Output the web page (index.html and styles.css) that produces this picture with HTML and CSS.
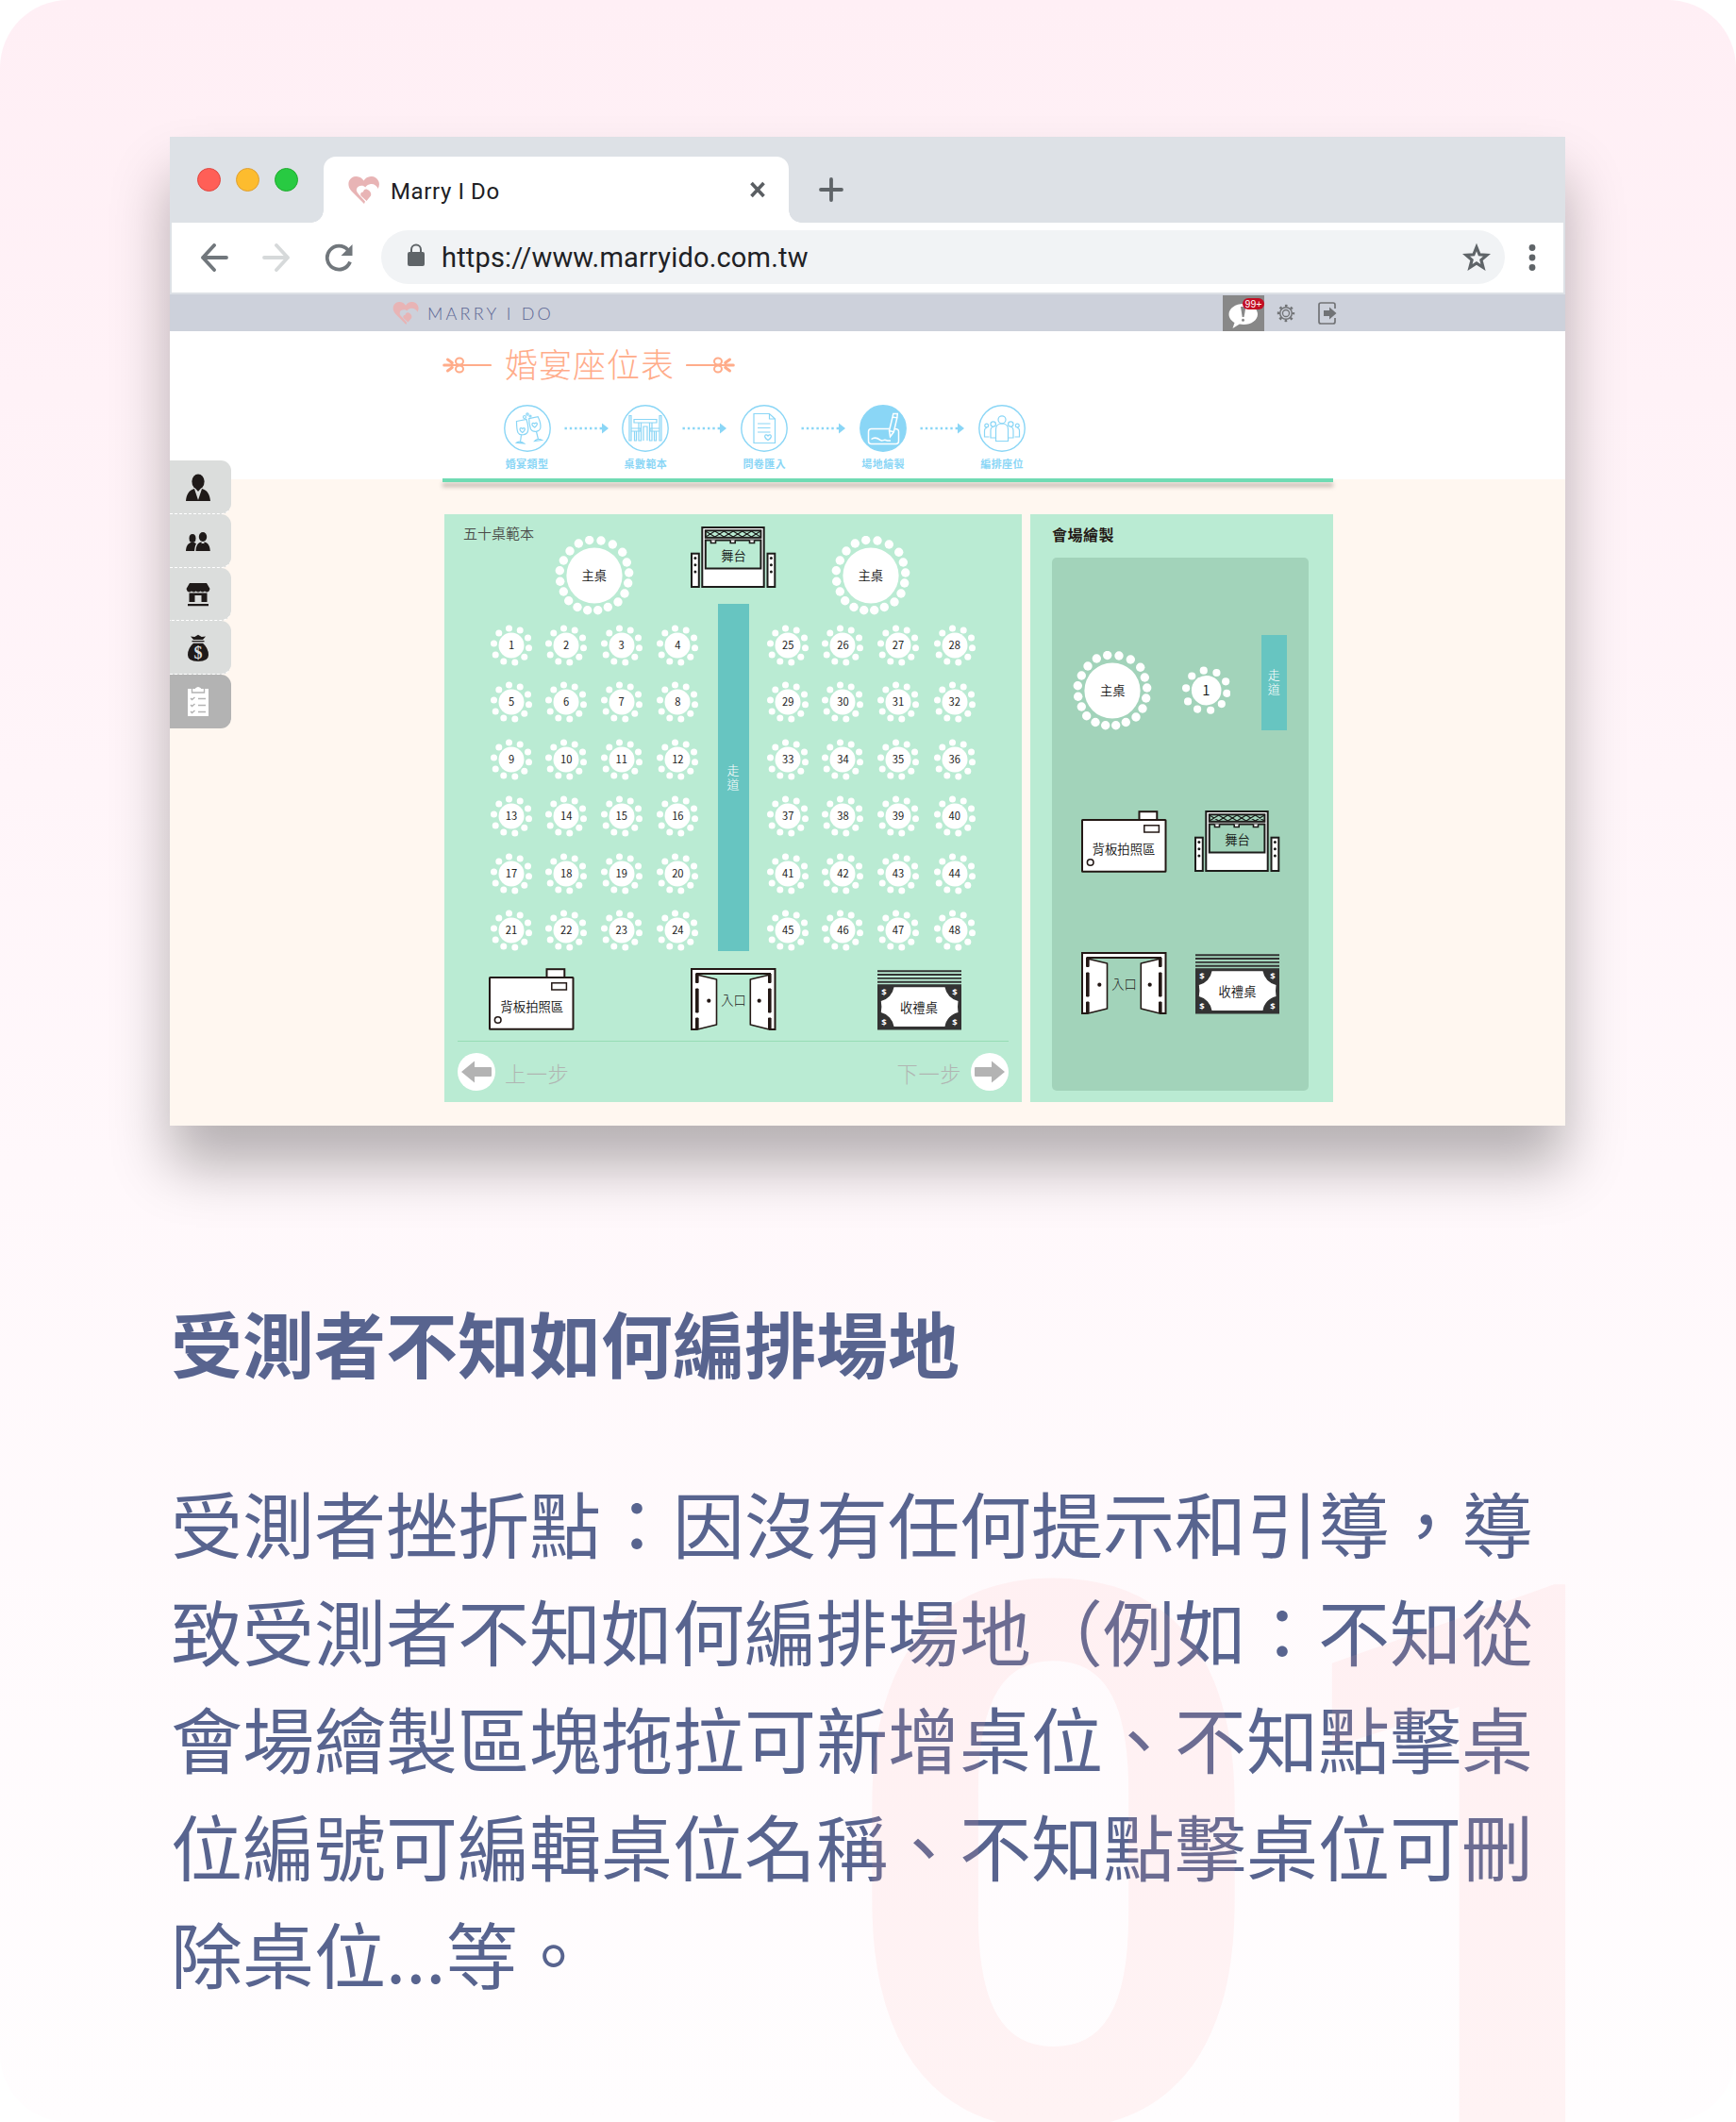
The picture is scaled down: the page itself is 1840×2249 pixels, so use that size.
FILE: index.html
```html
<!DOCTYPE html>
<html lang="zh-Hant">
<head>
<meta charset="utf-8">
<title>Marry I Do</title>
<link rel="stylesheet" href="styles.css">
</head>
<body>
<svg class="defs" width="0" height="0" aria-hidden="true">
  <symbol id="heart" viewBox="0 0 33 29">
    <path d="M17 29 3.500 15.500C-.5 11-1 4.500 4 1.200 8.500-1.400 14 .4 16.500 4.500 19 .4 24.500-1.400 29 1.200c4.500 3 4.800 7.800 2.600 11.800C30.500 9.800 27 7.500 23.200 8.200c-2.700.5-4 1.800-5 3.300C16.500 9.500 13 9.300 10.500 11c-2.500 2.300-2 5 .3 7.500L18 26.500z"/>
    <path d="M13.500 20.500c-1-2.500.5-4 2.500-4 .3-2.500 2.500-3.700 4.500-2.500 3 1.500 4.500 4 3.500 6.500l-4.500 5.500z"/>
  </symbol>
  <symbol id="main-table" viewBox="-42 -42 84 84">
    <circle r="29.600"/>
    <circle cx="-5.300" cy="-37.500" r="4.700"/><circle cx="7" cy="-37" r="4.700"/><circle cx="19.300" cy="-33" r="4.700"/><circle cx="29.700" cy="-24.700" r="4.700"/><circle cx="34.300" cy="-14" r="4.700"/>
    <circle cx="36.700" cy="-3" r="4.700"/><circle cx="35.700" cy="8" r="4.700"/><circle cx="32" cy="19" r="4.700"/><circle cx="25" cy="28" r="4.700"/><circle cx="14.300" cy="33.500" r="4.700"/>
    <circle cx="3.700" cy="36.700" r="4.700"/><circle cx="-7.300" cy="36.700" r="4.700"/><circle cx="-18" cy="33.500" r="4.700"/><circle cx="-27.300" cy="26.700" r="4.700"/><circle cx="-32.700" cy="17" r="4.700"/>
    <circle cx="-36.300" cy="6.300" r="4.700"/><circle cx="-36.700" cy="-5.300" r="4.700"/><circle cx="-32.700" cy="-16" r="4.700"/><circle cx="-26" cy="-26" r="4.700"/><circle cx="-16.700" cy="-34" r="4.700"/>
  </symbol>
  <symbol id="guest-table" viewBox="-22 -22 44 44">
    <circle r="13.500"/>
    <circle cx="-2.500" cy="-18" r="3.500"/><circle cx="9.200" cy="-16" r="3.500"/><circle cx="17.500" cy="-8" r="3.500"/><circle cx="18.500" cy="2.700" r="3.500"/><circle cx="13.800" cy="12.300" r="3.500"/>
    <circle cx="3.800" cy="18" r="3.500"/><circle cx="-8.200" cy="17" r="3.500"/><circle cx="-16.800" cy="10" r="3.500"/><circle cx="-18.500" cy="-2" r="3.500"/><circle cx="-13.200" cy="-13" r="3.500"/>
  </symbol>
  <symbol id="stage" viewBox="0 0 91 66">
    <g stroke="#1d1d1b" stroke-width="2">
      <rect x="12.300" y="1" width="65.400" height="63" fill="#fff"/>
      <rect class="board" x="15.800" y="4.300" width="58.600" height="7.500"/>
      <rect class="board" x="15.800" y="14.500" width="58.600" height="30"/>
      <path d="m16 5 9.700 6 9.700-6 9.700 6 9.700-6 9.700 6 9.500-6M16 11l9.700-6 9.700 6 9.700-6 9.700 6 9.700-6 9.500 6" fill="none" stroke-width="1.100"/>
      <path d="M21.500 14.500v3h5v-3M42.200 14.500v3h5v-3M62.500 14.500v3h5v-3" fill="#fff" stroke-width="1.600"/>
      <rect x="1" y="28.700" width="7.800" height="35.300" fill="#fff"/>
      <rect x="81.500" y="28.700" width="7.800" height="35.300" fill="#fff"/>
    </g>
    <g fill="#1d1d1b"><circle cx="4.900" cy="33.500" r="1.500"/><circle cx="4.900" cy="40.700" r="1.500"/><circle cx="4.900" cy="48" r="1.500"/><circle cx="85.400" cy="33.500" r="1.500"/><circle cx="85.400" cy="40.700" r="1.500"/><circle cx="85.400" cy="48" r="1.500"/></g>
  </symbol>
  <symbol id="booth" viewBox="0 0 91 66">
    <g fill="#fff" stroke="#231815" stroke-width="2">
      <rect x="61.500" y="1.200" width="18.800" height="8.800"/>
      <rect x="1" y="10" width="88.500" height="54.700" rx=".5"/>
      <rect x="66.800" y="15.800" width="15.600" height="7.200" stroke-width="1.500"/>
      <circle cx="9.700" cy="55" r="3.300" stroke-width="1.600"/>
    </g>
  </symbol>
  <symbol id="door" viewBox="0 0 91 66">
    <path d="M1 65V1h88.500v64h-5.500V6H6.500v59z" fill="#fff" stroke="#231815" stroke-width="2"/>
    <g fill="#fff" stroke="#231815" stroke-width="1.600" stroke-linejoin="round">
      <path d="M7.300 7.300 27.500 12v48L7.300 65zM83.200 7.300 63.300 12v48l19.900 5z"/>
    </g>
    <path d="M6.800 6v9.500M6.800 22v25M6.800 53v12M83.800 6v9.500M83.800 22v25M83.800 53v12" stroke="#231815" stroke-width="3.600"/>
    <path d="M4.600 16v5.500h4.600V16zM4.600 47.500v5h4.600v-5zM81.600 16v5.500h4.600V16zM81.600 47.500v5h4.600v-5z" fill="#fff"/>
    <circle cx="19.300" cy="34.700" r="2.100" fill="#231815"/><circle cx="72.700" cy="34.700" r="2.100" fill="#231815"/>
  </symbol>
  <symbol id="cash" viewBox="0 0 89 64">
    <path d="M0 1.200h89M0 5h89M0 8.900h89M0 12.800h89" stroke="#333" stroke-width="1.900"/>
    <rect y="15.200" width="89" height="48.300" fill="#333"/>
    <path d="M17.500 18.300h54A18 18 0 0 0 85.500 33Q84.500 39 85.500 45A18 18 0 0 0 71.500 60h-54A18 18 0 0 0 3.800 45Q5 39 3.800 33A18 18 0 0 0 17.500 18.300z" fill="#fff"/>
  </symbol>
  <symbol id="dots" viewBox="0 0 48 12">
    <path d="M1.500 6H41" stroke="#8ad6f6" stroke-width="2.500" stroke-dasharray="2.400 2.900"/><path d="M41 .5 48 6l-7 5.500z" fill="#8ad6f6"/>
  </symbol>
  <symbol id="flourish" viewBox="0 0 52 18">
    <g fill="none" stroke="#ffac8a" stroke-linecap="round"><path d="M10 9h41" stroke-width="2.200"/><path d="M1.700 9H10M5.500 3 10.300 6.500M5.500 15l4.800-3.500" stroke-width="3"/><ellipse cx="18" cy="5" rx="4" ry="3.500" stroke-width="2"/><ellipse cx="18" cy="13" rx="4" ry="3.500" stroke-width="2"/></g>
  </symbol>
</svg>

<main class="card">
  <section class="window">
    <div class="tabstrip">
      <div class="lights"><i class="light red"></i><i class="light amber"></i><i class="light green"></i></div>
      <div class="tab">
        <svg class="tab-heart"><use href="#heart"/></svg>
        <span class="tab-title">Marry I Do</span>
        <svg class="tab-close" viewBox="0 0 18 18"><path d="m2.500 2 13 14M15.500 2l-13 14" stroke="#5a5e62" stroke-width="3.600"/></svg>
      </div>
      <svg class="tab-new" viewBox="0 0 26 26"><path d="M13 2v22M2 13h22" stroke="#5f6468" stroke-width="3.800" stroke-linecap="round"/></svg>
    </div>
    <div class="toolbar">
      <svg class="nav" viewBox="0 0 30 30"><path d="M28 15H3M15 2 3 15l12 13" fill="none" stroke="#71777c" stroke-width="3.800" stroke-linecap="round" stroke-linejoin="round"/></svg>
      <svg class="nav" viewBox="0 0 30 30"><path d="M2 15h25M15 2l12 13-12 13" fill="none" stroke="#d6d9da" stroke-width="3.800" stroke-linecap="round" stroke-linejoin="round"/></svg>
      <svg class="nav" viewBox="0 0 30 30"><path d="M27 19.500A12.500 12.500 0 1 1 24.800 7" fill="none" stroke="#71777c" stroke-width="3.800"/><path d="M29.500 1v12h-12z" fill="#71777c"/></svg>
      <div class="omnibox">
        <svg class="lock" viewBox="0 0 18 24"><rect y="9" width="18" height="15" rx="2" fill="#5f6468"/><path d="M4 10V6.500a5 5 0 0 1 10 0V10" fill="none" stroke="#5f6468" stroke-width="2"/></svg>
        <span class="url">https://www.marryido.com.tw</span>
        <svg class="star" viewBox="0 0 30 30"><path d="m15 4 3.100 7.800 8 .5-6.200 5.200 2.100 8-7-4.500-7 4.500 2.100-8-6.200-5.200 8-.5z" fill="none" stroke="#5f6468" stroke-width="3.200"/></svg>
      </div>
      <svg class="more" viewBox="0 0 8 30"><circle cx="4" cy="4.500" r="3.400"/><circle cx="4" cy="15" r="3.400"/><circle cx="4" cy="25.500" r="3.400"/></svg>
    </div>

    <div class="appbar">
      <svg class="app-heart"><use href="#heart"/></svg>
      <span class="brand">MARRY I DO</span>
      <div class="notice">
        <svg viewBox="0 0 44 38"><path d="M22 9c8.500 0 15 4.800 15 11s-6.500 11-15 11c-1.500 0-3-.1-4.200-.4L10.500 35l2-6C9 27 6.500 23.800 6.500 20 6.500 13.800 13.500 9 22 9z" fill="#fff"/><path d="M19 12h5.500l-2 11h-1.800z" fill="#888"/><circle cx="21.500" cy="26.200" r="1.500" fill="#888"/></svg>
        <span class="badge">99+</span>
      </div>
      <svg class="gear" viewBox="-10 -10 20 20"><circle r="8" fill="none" stroke="#717376" stroke-width="2.400" stroke-dasharray="2.600 3.683" stroke-dashoffset="1.300"/><circle r="6.300" fill="none" stroke="#717376" stroke-width="1.500"/><circle r="3.500" fill="none" stroke="#717376" stroke-width="1.300"/></svg>
      <svg class="exit" viewBox="0 0 20 24"><path d="M18 7V3q0-2-2-2H3Q1 1 1 3v18q0 2 2 2h13q2 0 2-2v-4" fill="none" stroke="#717376" stroke-width="1.700"/><path d="M6 9h6V5.500l7.500 6.500-7.500 6.500V15H6z" fill="#717376"/></svg>
    </div>

    <div class="page">
      <header class="page-head">
        <h1 class="title"><svg class="flourish"><use href="#flourish"/></svg><span>婚宴座位表</span><svg class="flourish flip"><use href="#flourish"/></svg></h1>
        <ol class="steps">
          <li class="step"><svg viewBox="0 0 50 50"><circle cx="25" cy="25" r="24.200"/><path d="m13.500 17.500 10.500-2c1.500 5 2.500 9 1.500 12.500-1 4-8.500 5.500-10.500 1.500-1.500-3.500-1.500-8-1.500-12zM18.500 32l-1 7.500M13.500 40.200c3-2 5-1.500 8 .8z"/><path d="m26.700 14.700 9.500-2c2 4 3.300 8 2.600 12-1 4.300-8 5-10.300 1-1-3-1.800-7-1.800-11zM34.500 28.500l2 8M32.500 38.500c2-2.700 4.500-3 8-1z"/><path d="M19.800 29.500c-5-3.500-2-6.500 0-4 2-2.500 4.500.5 0 4zM32.800 24c-5-3-2.500-6 0-4 2-2.500 4.500.5 0 4z"/><circle cx="22" cy="13" r="1.500"/><circle cx="25" cy="10" r="1.200"/><circle cx="28" cy="12" r="1"/></svg><span>婚宴類型</span></li>
          <li class="dots"><svg><use href="#dots"/></svg></li>
          <li class="step"><svg viewBox="0 0 50 50"><circle cx="25" cy="25" r="24.200"/><path d="M13 15.500h24v3.500H13zM18 19v19h2.500V19M29.500 19v19H32V19M8 11.500V38h2V11.500zM42 11.500V38h-2V11.500zM10 25h10v3H10M40 25H30v3h10M13.500 28v10h2V28M36.500 28v10h-2V28M25 23h-2v15M27 38V23h-2"/></svg><span>桌數範本</span></li>
          <li class="dots"><svg><use href="#dots"/></svg></li>
          <li class="step"><svg viewBox="0 0 50 50"><circle cx="25" cy="25" r="24.200"/><path d="M14 9.500h16.500l6 5.500v25.500H14zM30.500 9.500V15h6M18 20h13.500M18 24.500h13.500M18 29h13.500M29 37.500c-6-4-2.500-7.500 0-4.500 2.500-3 6 .5 0 4.500z"/></svg><span>問卷匯入</span></li>
          <li class="dots"><svg><use href="#dots"/></svg></li>
          <li class="step active"><svg viewBox="0 0 50 50"><circle cx="25" cy="25" r="24.200"/><path d="M31.500 25.500H12.500q-3 0-3 3v10q0 3 3 3h26q3 0 3-3v-10q0-3-4-3M12.500 36.500c4-3 7-1 9.500.8s3.500-.8 6 .2 4 .5 5 .5"/><path d="M31.500 27.500 35 13l4.800.8-3.500 15-3.800 5zM35 13l.8-3.500h4.500l-.5 4.300M31.500 27.500l4.800 1.300"/></svg><span>場地繪製</span></li>
          <li class="dots"><svg><use href="#dots"/></svg></li>
          <li class="step"><svg viewBox="0 0 50 50"><circle cx="25" cy="25" r="24.200"/><circle cx="25" cy="15.800" r="4"/><path d="M18.500 38.500V26q0-6 6.500-6t6.500 6v12.500z"/><circle cx="15.700" cy="20.500" r="2.700"/><path d="M18 35h-5v-7.500q0-4 3-4M32 35h5v-7.500q0-4-3-4"/><circle cx="34.300" cy="20.500" r="2.700"/><circle cx="8.700" cy="22" r="1.900"/><path d="M11.500 34H6.500v-6q0-3.500 2.500-3.500M38.500 34h5v-6q0-3.500-2.500-3.500"/><circle cx="41.300" cy="22" r="1.900"/></svg><span>編排座位</span></li>
        </ol>
      </header>

      <nav class="side">
        <a class="side-item"><svg viewBox="0 0 26 30"><ellipse cx="13" cy="8.500" rx="6.600" ry="8"/><path d="M0 29c.5-6.500 3-11.500 9-13l4 12 4-12c6 1.500 8.500 6.500 9 13z"/><path d="M10.500 16h5L13 19z"/></svg></a>
        <a class="side-item"><svg viewBox="0 0 26 30"><ellipse cx="7" cy="11.500" rx="3.500" ry="4.600"/><path d="M0 25c.3-4.500 1.500-7.500 5-9h4q1.500.5 2 1.500C9.500 19.500 9.500 22 9 25z"/><ellipse cx="18" cy="10" rx="4.200" ry="5"/><path d="M10.500 25c.3-5.500 2-9 6-9.500L18 24l1.500-8.500c4 .5 6 4 6.300 9.500z"/><path d="M17 17h2l.5 6-1.500 2-1.500-2z"/></svg></a>
        <a class="side-item"><svg viewBox="0 0 26 30"><path d="M4 3h18l3.500 6-1 2.500q-2.300 1.800-4.500 0-2.200 1.800-4.500 0-2.500 1.800-4.800 0-2.300 1.800-4.700 0-2.200 1.800-4.500 0L.5 9zM3.500 13.500h19V23h-6v-7h-7v7h-6zM2 25h22v2.200H2z"/></svg></a>
        <a class="side-item"><svg viewBox="0 0 26 30"><path d="M8 6 5 2.500l4.300.5L13 .8 16.700 3l4.300-.5L18 6zM6.500 7h13v1.300h-13zM8 9.800h10q6 5 6 12.500Q24 29 13 29T2 22.300Q2 14.800 8 9.800z"/><text x="13" y="26" text-anchor="middle" fill="#dbdddc" font-family="Liberation Serif, serif" font-weight="700" font-size="18">$</text></svg></a>
        <a class="side-item active"><svg viewBox="0 0 26 34"><path d="M2 3h22v29H2z" fill="#fff"/><path d="M6.500 3v4h13V3" fill="none" stroke="#b3b3b3" stroke-width="1.400"/><path d="M10 2.500q3-3 6 0V4h-6z" fill="#fff"/><path d="m5 13 1.500 1.500L9.500 12M5 20l1.500 1.500L9.500 19M5 27l1.500 1.500L9.500 26M13 13.500h8M13 20.500h8M13 27.500h8" fill="none" stroke="#b3b3b3" stroke-width="1.400"/></svg></a>
      </nav>

      <div class="boards">
        <section class="board-main">
          <h2 class="template-name">五十桌範本</h2>
          <div class="obj main-table" style="left:116.700px;top:23.300px"><svg><use href="#main-table"/></svg><span>主桌</span></div>
          <div class="obj main-table" style="left:409.800px;top:23.300px"><svg><use href="#main-table"/></svg><span>主桌</span></div>
          <div class="obj stage" style="left:261px;top:13px"><svg><use href="#stage"/></svg><span>舞台</span></div>
          <ul class="tables left">
            <li><svg><use href="#guest-table"/></svg><span>1</span></li><li><svg><use href="#guest-table"/></svg><span>2</span></li><li><svg><use href="#guest-table"/></svg><span>3</span></li><li><svg><use href="#guest-table"/></svg><span>4</span></li>
            <li><svg><use href="#guest-table"/></svg><span>5</span></li><li><svg><use href="#guest-table"/></svg><span>6</span></li><li><svg><use href="#guest-table"/></svg><span>7</span></li><li><svg><use href="#guest-table"/></svg><span>8</span></li>
            <li><svg><use href="#guest-table"/></svg><span>9</span></li><li><svg><use href="#guest-table"/></svg><span>10</span></li><li><svg><use href="#guest-table"/></svg><span>11</span></li><li><svg><use href="#guest-table"/></svg><span>12</span></li>
            <li><svg><use href="#guest-table"/></svg><span>13</span></li><li><svg><use href="#guest-table"/></svg><span>14</span></li><li><svg><use href="#guest-table"/></svg><span>15</span></li><li><svg><use href="#guest-table"/></svg><span>16</span></li>
            <li><svg><use href="#guest-table"/></svg><span>17</span></li><li><svg><use href="#guest-table"/></svg><span>18</span></li><li><svg><use href="#guest-table"/></svg><span>19</span></li><li><svg><use href="#guest-table"/></svg><span>20</span></li>
            <li><svg><use href="#guest-table"/></svg><span>21</span></li><li><svg><use href="#guest-table"/></svg><span>22</span></li><li><svg><use href="#guest-table"/></svg><span>23</span></li><li><svg><use href="#guest-table"/></svg><span>24</span></li>
          </ul>
          <div class="aisle" style="left:289.500px;top:95px;width:33px;height:368px">走道</div>
          <ul class="tables right">
            <li><svg><use href="#guest-table"/></svg><span>25</span></li><li><svg><use href="#guest-table"/></svg><span>26</span></li><li><svg><use href="#guest-table"/></svg><span>27</span></li><li><svg><use href="#guest-table"/></svg><span>28</span></li>
            <li><svg><use href="#guest-table"/></svg><span>29</span></li><li><svg><use href="#guest-table"/></svg><span>30</span></li><li><svg><use href="#guest-table"/></svg><span>31</span></li><li><svg><use href="#guest-table"/></svg><span>32</span></li>
            <li><svg><use href="#guest-table"/></svg><span>33</span></li><li><svg><use href="#guest-table"/></svg><span>34</span></li><li><svg><use href="#guest-table"/></svg><span>35</span></li><li><svg><use href="#guest-table"/></svg><span>36</span></li>
            <li><svg><use href="#guest-table"/></svg><span>37</span></li><li><svg><use href="#guest-table"/></svg><span>38</span></li><li><svg><use href="#guest-table"/></svg><span>39</span></li><li><svg><use href="#guest-table"/></svg><span>40</span></li>
            <li><svg><use href="#guest-table"/></svg><span>41</span></li><li><svg><use href="#guest-table"/></svg><span>42</span></li><li><svg><use href="#guest-table"/></svg><span>43</span></li><li><svg><use href="#guest-table"/></svg><span>44</span></li>
            <li><svg><use href="#guest-table"/></svg><span>45</span></li><li><svg><use href="#guest-table"/></svg><span>46</span></li><li><svg><use href="#guest-table"/></svg><span>47</span></li><li><svg><use href="#guest-table"/></svg><span>48</span></li>
          </ul>
          <div class="obj booth" style="left:47.300px;top:481px"><svg><use href="#booth"/></svg><span>背板拍照區</span></div>
          <div class="obj door" style="left:260.500px;top:481px"><svg><use href="#door"/></svg><span>入口</span></div>
          <div class="obj cash" style="left:458.500px;top:483px"><svg viewBox="0 0 89 64"><use href="#cash"/><text x="7" y="26.500">$</text><text x="82" y="26.500">$</text><text x="7" y="58.500">$</text><text x="82" y="58.500">$</text></svg><span>收禮桌</span></div>
          <footer class="pager">
            <a class="pager-link"><svg viewBox="0 0 40 40"><circle cx="20" cy="20" r="20" fill="#fff"/><path d="M4 20 18 8.500V15h17q1 0 1 1v8q0 1-1 1H18v6.500z" fill="#b3b3b3"/></svg><span>上一步</span></a>
            <a class="pager-link"><span>下一步</span><svg viewBox="0 0 40 40"><circle cx="20" cy="20" r="20" fill="#fff"/><path d="M36 20 22 8.500V15H5q-1 0-1 1v8q0 1 1 1h17v6.500z" fill="#b3b3b3"/></svg></a>
          </footer>
        </section>

        <section class="board-side">
          <h2 class="palette-name">會場繪製</h2>
          <div class="palette">
            <div class="obj main-table" style="left:22.300px;top:99px"><svg><use href="#main-table"/></svg><span>主桌</span></div>
            <div class="obj guest" style="left:137.800px;top:114.700px"><svg><use href="#guest-table"/></svg><span>1</span></div>
            <div class="aisle" style="left:221.500px;top:82px;width:27.500px;height:100.500px">走道</div>
            <div class="obj booth" style="left:30.500px;top:268px"><svg><use href="#booth"/></svg><span>背板拍照區</span></div>
            <div class="obj stage" style="left:151px;top:268px"><svg><use href="#stage"/></svg><span>舞台</span></div>
            <div class="obj door" style="left:30.500px;top:418px"><svg><use href="#door"/></svg><span>入口</span></div>
            <div class="obj cash" style="left:152px;top:420px"><svg viewBox="0 0 89 64"><use href="#cash"/><text x="7" y="26.500">$</text><text x="82" y="26.500">$</text><text x="7" y="58.500">$</text><text x="82" y="58.500">$</text></svg><span>收禮桌</span></div>
          </div>
        </section>
      </div>
    </div>
  </section>

  <h2 class="finding">受測者不知如何編排場地</h2>
  <p class="detail">受測者挫折點：因沒有任何提示和引導，導<br>致受測者不知如何編排場地（例如：不知從<br>會場繪製區塊拖拉可新增桌位、不知點擊桌<br>位編號可編輯桌位名稱、不知點擊桌位可刪<br>除桌位...等。</p>
  <div class="number">01</div>
</main>
</body>
</html>
```
FILE: styles.css
```css
* { box-sizing: border-box; }
html, body { margin: 0; background: #fff; }
body { width: 1840px; height: 2249px; overflow: hidden; font-family: "Noto Sans CJK TC", "Noto Sans", sans-serif; }
h1, h2, p, ol, ul { margin: 0; padding: 0; list-style: none; font-weight: 400; }
svg { display: block; flex: none; }
.defs { position: absolute; }

.card {
  position: relative; width: 1840px; height: 2249px; padding: 145px 181px 0 180px;
  border-radius: 72px; overflow: hidden;
  background: linear-gradient(#ffeff5 0%, #fff8fb 55%, #fffdfe 100%);
}

/* browser window */
.window { width: 1479px; height: 1048px; display: flex; flex-direction: column; background: #fff7f0; box-shadow: 0 43px 57px rgba(0, 0, 0, .29); }
.tabstrip { height: 91px; display: flex; align-items: flex-end; background: #dde1e6; padding-left: 29px; }
.lights { display: flex; gap: 16px; width: 134px; padding-bottom: 33px; }
.light { width: 25px; height: 25px; border-radius: 50%; border: 1.500px solid; }
.red { background: #ff5f57; border-color: #df4741; }
.amber { background: #fdbc2e; border-color: #dea034; }
.green { background: #28ca42; border-color: #21ab2f; }
.tab { position: relative; width: 493px; height: 70px; display: flex; align-items: center; padding: 0 24px 0 26px; border-radius: 13px 13px 0 0; background: #fff; }
.tab::before, .tab::after { content: ""; position: absolute; bottom: 0; width: 13px; height: 13px; }
.tab::before { left: -13px; background: radial-gradient(circle at 0 0, transparent 12.500px, #fff 13px); }
.tab::after { right: -13px; background: radial-gradient(circle at 100% 0, transparent 12.500px, #fff 13px); }
.tab-heart { width: 33px; height: 29px; fill: #e8b4b5; }
.tab-title { flex: 1; margin-left: 12px; padding-top: 3px; font: 24px Roboto, sans-serif; letter-spacing: .6px; color: #202124; }
.tab-close { width: 18px; height: 18px; }
.tab-new { width: 26px; height: 26px; margin: 0 0 22px 32px; }
.toolbar { height: 76px; display: flex; align-items: center; padding: 0 28px 1px 30px; background: #fff; border: solid #dde1e6; border-width: 0 2px 2px; }
.nav { width: 30px; height: 30px; margin-right: 36px; }
.nav:nth-child(3) { margin-right: 30px; }
.omnibox { width: 1191px; height: 57px; display: flex; align-items: center; padding: 0 15px 0 28px; border-radius: 29px; background: #f1f3f5; }
.lock { width: 18px; height: 24px; margin-bottom: 6px; }
.url { flex: 1; margin-left: 18px; font: 29px Roboto, sans-serif; letter-spacing: .18px; color: #202124; }
.star { width: 30px; height: 30px; }
.more { width: 8px; height: 30px; margin-left: 25px; fill: #5f6468; }

/* site bar */
.appbar { height: 39px; display: flex; align-items: center; background: #cdd1db; padding-left: 236px; }
.app-heart { width: 28px; height: 24px; fill: #e8b4b5; }
.brand { width: 851px; margin-left: 9px; font: 300 18px Lato, sans-serif; letter-spacing: 3.200px; color: #5c6694; }
.notice { position: relative; width: 44px; height: 38px; margin: 0 13px 0 -8px; background: #888; }
.badge { position: absolute; top: 3px; right: 0; width: 23px; height: 12px; border-radius: 6px; background: #c30d23; color: #fff; font: 10.500px/13px "Liberation Sans", sans-serif; text-align: center; white-space: nowrap; }
.gear { width: 20px; height: 20px; }
.exit { width: 20px; height: 24px; margin-left: 24px; }

/* page header */
.page { position: relative; flex: 1; }
.page-head { height: 157px; background: #fff; padding-left: 289px; position: relative; }
.page-head::after { content: ""; display: block; position: absolute; left: 289px; bottom: -3px; width: 944px; height: 4px; background: #70dbb3; box-shadow: 0 5px 4px rgba(110, 90, 80, .4); }
.title { display: flex; align-items: center; height: 72px; color: #ffac8a; font-size: 35px; font-weight: 300; letter-spacing: 1px; line-height: 72px; }
.title span { margin: -5px 12px 0 14px; }
.flourish { width: 52px; height: 18px; }
.flip { transform: scaleX(-1); }
.steps { display: flex; padding-left: 64.500px; }
.step { width: 50px; text-align: center; color: #8ad6f6; font-size: 11px; font-weight: 700; line-height: 16px; white-space: nowrap; }
.step svg { width: 50px; height: 50px; margin: 6px 0 4px; fill: none; stroke: #8ad6f6; stroke-width: 1.200; }
.step circle:first-child { stroke-width: 1.400; }
.step span { display: block; margin: 0 -5px; letter-spacing: .4px; }
.step.active svg { stroke: #fff; stroke-width: 1.500; }
.step.active circle:first-child { fill: #8ad6f6; stroke: #8ad6f6; }
.dots { width: 75.900px; padding: 25px 0 0 13px; }
.dots svg { width: 48px; height: 12px; }

/* side tabs float over the header edge */
.side { position: absolute; left: 0; top: 137px; width: 64.500px; }
.side-item { height: 56.800px; display: flex; align-items: center; padding: 2px 0 0 17px; background: #dbdddc; border-radius: 0 11px 11px 0; border-bottom: 1.500px dashed #fff; }
.side-item svg { width: 26px; height: 30px; fill: #1f1a19; }
.side-item.active { padding-top: 0; background: #b3b3b3; border-bottom: 0; }
.side-item.active svg { height: 34px; }

/* floor plan */
.boards { display: flex; gap: 9px; padding: 37px 0 0 291px; }
.board-main, .board-side { height: 623px; background: #baebd3; --board: #baebd3; }
.board-main { position: relative; width: 612px; }
.board-side { width: 321px; padding: 10px 26px 0 23px; }
.template-name { position: absolute; left: 20px; top: 8px; font-size: 15px; line-height: 24px; color: #4a4a48; font-weight: 350; }
.palette-name { font-size: 16px; line-height: 22px; font-weight: 700; color: #231815; letter-spacing: .5px; }
.palette { position: relative; width: 272px; height: 565px; margin-top: 14px; border-radius: 5px; background: #a2d3ba; --board: #a2d3ba; }
.board { fill: var(--board); }
.obj { position: absolute; width: 91px; height: 66px; color: #111; font-size: 13.300px; font-weight: 350; line-height: 20px; white-space: nowrap; }
.obj svg { width: 100%; height: 100%; }
.obj span { position: absolute; left: 0; right: 0; text-align: center; }
.main-table { width: 84px; height: 84px; fill: #fff; }
.main-table span { top: 32px; }
.guest { width: 51.400px; height: 51.400px; fill: #fff; }
.guest span { top: 15px; font-size: 15px; }
.stage span { top: 21px; }
.booth span { top: 31px; }
.door span { top: 24px; left: 1px; color: #222; font-weight: 300; }
.cash { width: 89px; height: 64px; }
.cash span { top: 30px; }
.cash text { fill: #fff; font: 700 9.500px "Noto Sans", sans-serif; text-anchor: middle; }
.tables { position: absolute; top: 116.500px; display: grid; grid-template-columns: 58.200px 58.500px 59.700px 44px; grid-auto-rows: 60.600px; }
.tables.left { left: 49px; }
.tables.right { left: 342.300px; }
.tables li { position: relative; width: 44px; height: 44px; fill: #fff; }
.tables svg { width: 44px; height: 44px; }
.tables span { position: absolute; inset: 13px 0 auto; text-align: center; font-size: 11.200px; line-height: 16px; color: #222; }
.aisle { position: absolute; display: flex; align-items: center; justify-content: center; writing-mode: vertical-rl; background: #67c5c1; color: #fff; font-size: 13px; font-weight: 300; letter-spacing: 1.500px; }
.pager { position: absolute; left: 14px; right: 14px; top: 558px; height: 65px; display: flex; justify-content: space-between; border-top: 1px solid #96ddb5; }
.pager-link { display: flex; align-items: center; gap: 10px; font-size: 22.300px; font-weight: 300; letter-spacing: .5px; color: #b0b5b2; }
.pager-link svg { width: 40px; height: 40px; }
.pager-link span { padding-top: 2px; }

/* copy */
.finding { margin: 172px 0 0 1px; font-size: 76px; line-height: 114px; font-weight: 700; color: #58648f; white-space: nowrap; }
.detail { margin: 77px 0 0 1px; font-size: 76px; line-height: 114px; color: #58648f; white-space: nowrap; text-spacing-trim: space-all; }
.number { position: absolute; left: 887px; top: 1476px; font: 700 800px/1000px Roboto, sans-serif; color: rgba(255, 169, 175, .12); }
```
